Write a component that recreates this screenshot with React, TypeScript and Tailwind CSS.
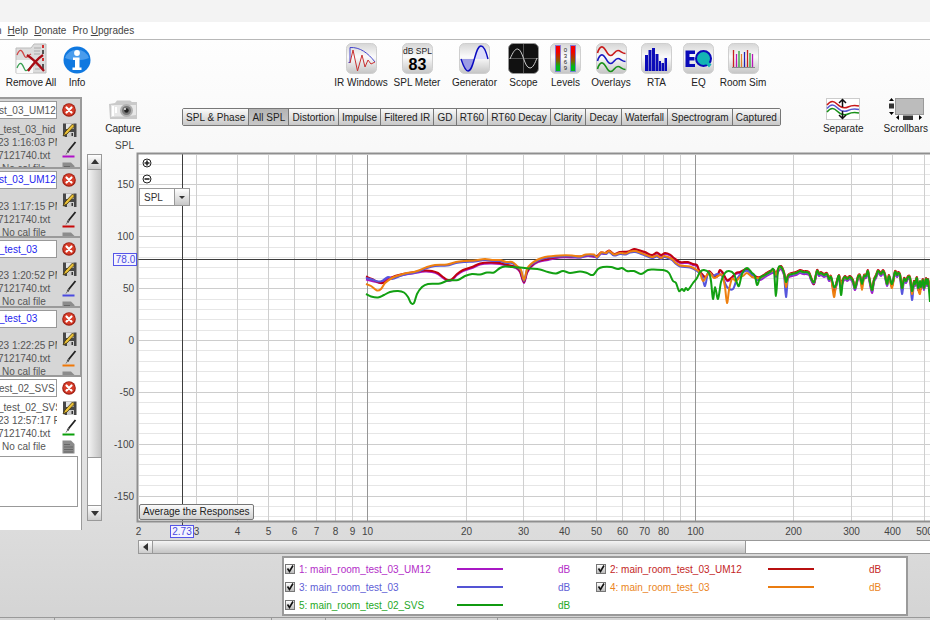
import { useState } from "react";
import type { ReactNode } from "react";

type Point = [number, number];

interface Measurement {
  title: string;
  notes: string;
  time: string;
  color: string;
  titleClass: string;
}

const measurements: Measurement[] = [
  { title: "st_03_UM12", notes: "_test_03_hid", time: "23 1:16:03 PM", color: "#b010c8", titleClass: "text-[#555]" },
  { title: "st_03_UM12", notes: "", time: "23 1:17:15 PM", color: "#c80808", titleClass: "text-[#2424f0]" },
  { title: "_test_03", notes: "", time: "23 1:20:52 PM", color: "#4a4ae0", titleClass: "text-[#2424f0]" },
  { title: "_test_03", notes: "", time: "23 1:22:25 PM", color: "#f07808", titleClass: "text-[#2424f0]" },
];

const selected: Measurement = {
  title: "est_02_SVS",
  notes: "_test_02_SVS",
  time: "23 12:57:17 PM",
  color: "#0a9f0a",
  titleClass: "text-[#555]",
};

const tabs = [
  "SPL & Phase",
  "All SPL",
  "Distortion",
  "Impulse",
  "Filtered IR",
  "GD",
  "RT60",
  "RT60 Decay",
  "Clarity",
  "Decay",
  "Waterfall",
  "Spectrogram",
  "Captured",
];

const legend = [
  { label: "1: main_room_test_03_UM12", textClass: "text-[#b32cc8]", lineClass: "bg-[#a818c4]" },
  { label: "2: main_room_test_03_UM12", textClass: "text-[#c42626]", lineClass: "bg-[#b81010]" },
  { label: "3: main_room_test_03", textClass: "text-[#6060d6]", lineClass: "bg-[#5454d4]" },
  { label: "4: main_room_test_03", textClass: "text-[#ea8422]", lineClass: "bg-[#ea7c10]" },
  { label: "5: main_room_test_02_SVS", textClass: "text-[#26a826]", lineClass: "bg-[#109a10]" },
];

// Traces are stored as plotted points; above ~160 Hz all of them share one shape.
const tail: Point[] = [
  [760, 278], [765, 275], [770, 272], [774, 271], [776, 275], [778, 270], [781, 267], [784, 273], [786, 282], [788, 276], [792, 274],
  [796, 273], [800, 271], [803, 272], [809, 273], [811, 278], [814, 282], [817, 271], [819, 274], [821, 273], [824, 275], [827, 274],
  [829, 279], [831, 277], [834, 287], [836, 285], [839, 276], [841, 284], [843, 280], [845, 277], [847, 279], [850, 277], [853, 281],
  [855, 288], [858, 277], [860, 276], [862, 284], [864, 276], [866, 276], [868, 271], [869, 277], [872, 290], [874, 280], [876, 276],
  [878, 271], [881, 274], [883, 271], [885, 275], [887, 284], [889, 276], [892, 284], [895, 272], [897, 275], [898, 273], [900, 275],
  [902, 288], [904, 279], [906, 281], [908, 277], [910, 278], [912, 291], [914, 282], [915, 284], [917, 278], [918, 288], [920, 281],
  [921, 287], [923, 280], [924, 288], [926, 279], [927, 284], [928, 280], [930, 290],
];

const tailWith = (dy: number, dips: Record<number, number>): Point[] =>
  tail.map(([x, y]) => [x, dips[x] ?? y + dy]);

const red: Point[] = [
  [366, 276.5], [372, 279], [378, 282], [383, 283], [388, 280], [395, 276], [403, 274], [415, 272], [425, 270.5], [432, 271], [438, 273],
  [443, 277], [448, 280], [452, 279], [457, 274], [463, 270], [472, 267], [480, 263.5], [490, 262.5], [500, 263], [508, 265], [516, 267],
  [520, 271], [524, 282], [527, 272], [531, 266], [538, 261], [548, 259], [560, 256.5], [580, 256.5], [588, 255], [597, 256], [601, 252.5],
  [605, 253], [609, 250.5], [614, 254], [620, 252], [628, 251.5], [634, 249], [640, 250.5], [645, 252], [652, 255], [657, 252.5], [661, 255],
  [665, 253], [670, 254.5], [674, 258], [680, 262], [688, 262], [693, 264], [697, 265], [699, 270], [702, 274], [706, 277], [709, 271],
  [713, 275], [717, 276], [720, 270], [723, 273], [727, 280], [731, 278], [736, 273], [740, 272], [747, 269], [752, 274], [757, 277],
];

const orange: Point[] = [
  [366, 284], [371, 286], [377, 290.5], [381, 289], [385, 283], [392, 278], [400, 275], [407, 273], [414, 272], [420, 270], [427, 267],
  [435, 265], [447, 264.5], [456, 262], [465, 261], [475, 260.5], [485, 259], [492, 260], [500, 260], [506, 262], [512, 262], [517, 266],
  [521, 270], [524, 280], [527, 269], [531, 264], [538, 259.5], [545, 257], [560, 255.5], [572, 255.5], [580, 256.5], [586, 254.5],
  [594, 254.5], [597, 257], [601, 252.5], [606, 253], [609, 251], [614, 254.5], [620, 253], [626, 253.5], [630, 251.5], [635, 251],
  [640, 252.5], [645, 254.5], [652, 257], [657, 255.5], [661, 258], [664, 256], [668, 257], [672, 259], [676, 263], [680, 265.5],
  [690, 266.5], [697, 270], [700, 273], [703, 281], [707, 275], [710, 273], [714, 278], [718, 276], [722, 275], [725, 287], [727, 303],
  [729, 290], [732, 279], [736, 281], [740, 277], [743, 276], [747, 273], [752, 277], [757, 278],
];

const purple: Point[] = [[366, 279.5], [372, 281], [378, 282.5], [382, 283], [388, 278], ...red.filter(([x]) => x > 390).map(([x, y]): Point => [x, y + 1])];

const blue: Point[] = [
  [366, 278], [372, 279.5], [378, 281.5], [382, 281], [388, 277],
  ...orange.filter(([x]) => x > 390 && x < 700).map(([x, y]): Point => [x, y + 1]),
  [702, 276], [705, 286], [708, 273], [713, 276], [717, 274], [722, 276], [727, 287], [733, 289], [737, 279], [742, 273], [748, 271], [757, 280],
];

const green: Point[] = [
  [366, 294], [371, 296.5], [378, 297.5], [384, 295], [390, 292], [398, 291], [404, 292.5], [408, 297], [411, 303], [414, 303], [417, 294],
  [422, 287], [428, 284], [440, 283.5], [448, 280.5], [458, 280], [465, 276], [472, 274], [480, 274.5], [487, 272.5], [494, 272.5],
  [500, 268], [505, 266.5], [512, 267], [520, 267.5], [530, 268.5], [540, 269.5], [548, 272], [556, 273.5], [563, 271], [570, 273],
  [580, 271.5], [587, 273], [593, 275], [598, 269], [603, 267], [611, 267], [618, 269], [622, 268], [627, 271], [634, 271], [641, 274],
  [648, 270], [652, 269.5], [665, 270.5], [669, 273], [673, 281], [676, 283], [679, 291], [682, 289], [684, 291], [686, 288], [688, 290],
  [693, 283], [697, 278], [700, 272], [704, 270], [709, 273], [711, 281], [713, 299], [715, 287], [718, 299], [721, 282], [725, 273],
  [729, 271], [734, 274], [737, 283], [739, 286], [742, 274], [747, 268], [752, 273], [755, 276], [757, 285],
];

const traces = [
  { color: "#a818c4", points: [...purple, ...tailWith(2, { 834: 292, 872: 293, 912: 293 })] },
  { color: "#c00010", points: [...red, ...tailWith(-1, { 814: 284, 834: 292, 892: 286, 920: 290 })] },
  { color: "#5656dc", points: [...blue, ...tailWith(1, { 786: 297, 902: 294, 912: 300, 930: 293 })] },
  { color: "#ee8010", points: [...orange, ...tailWith(0, { 786: 287, 834: 297, 862: 290, 892: 288, 912: 294, 920: 294 })] },
  { color: "#12a012", points: [...green, ...tailWith(0, { 776: 296, 841: 295, 930: 302 })] },
];

// Catmull-Rom through the points, as cubic segments.
function smoothPath(points: Point[]) {
  let d = `M${points[0][0]} ${points[0][1]}`;
  for (let i = 0; i < points.length - 1; i++) {
    const p0 = points[i - 1] ?? points[i];
    const p1 = points[i];
    const p2 = points[i + 1];
    const p3 = points[i + 2] ?? p2;
    const k = (p2[0] - p1[0]) / 3;
    const m1 = (p2[1] - p0[1]) / Math.max(p2[0] - p0[0], 1);
    const m2 = (p3[1] - p1[1]) / Math.max(p3[0] - p1[0], 1);
    d += `C${p1[0] + k} ${p1[1] + m1 * k} ${p2[0] - k} ${p2[1] - m2 * k} ${p2[0]} ${p2[1]}`;
  }
  return d;
}

const freqX = (f: number) => Math.round(367 + Math.log10(f / 10) * 327.8) + 0.5;
const levelY = (db: number) => Math.round(340 - db * 1.037) + 0.5;

const freqs = [1, 10, 100, 1000].flatMap((d) => [1, 2, 3, 4, 5, 6, 7, 8, 9].map((n) => n * d)).filter((f) => f > 2);
const labelled = [2, ...freqs.filter((f) => f <= 500 && f !== 90)];
const levels = Array.from({ length: 35 }, (_, i) => 170 - i * 10);
const isDecade = (f: number) => f === 10 || f === 100 || f === 1000;

function Chart() {
  return (
    <svg className="block h-[402px] w-full font-[Liberation_Sans,sans-serif] text-[10px]" role="img" aria-label="SPL against frequency">
      <g transform="translate(-105 -138)">
        <rect x="138" y="154" width="3000" height="368" fill="#fff" />
        {levels.map((db) => (
          <line key={db} x1="139" x2="3000" y1={levelY(db)} y2={levelY(db)} stroke={db % 50 === 0 ? "#cdcdcd" : "#e6e6e6"} />
        ))}
        {freqs.map((f) => (
          <line key={f} x1={freqX(f)} x2={freqX(f)} y1="155" y2="521" stroke={isDecade(f) ? "#969696" : "#cfcfcf"} />
        ))}
        <path d="M138 259.5H3000M182.5 154V526" stroke="#3c3c3c" fill="none" />
        {traces.map((t) => (
          <path key={t.color} d={smoothPath(t.points)} fill="none" stroke={t.color} strokeWidth="2" strokeLinejoin="round" />
        ))}
        <path d="M3000 153.5H137.5V521.5H3000" stroke="#8f8f8f" strokeWidth="2" fill="none" />
        <g fill="#444">
          <text x="134" y="149" textAnchor="end">SPL</text>
          {[150, 100, 50, 0, -50, -100, -150].map((db) => (
            <text key={db} x="134" y={levelY(db) + 3.5} textAnchor="end">{db}</text>
          ))}
          {labelled.map((f) => (
            <text key={f} x={freqX(f)} y="535" textAnchor="middle">{f}</text>
          ))}
        </g>
        <g fill="#f4f4ff" stroke="#5555e8">
          <rect x="113.5" y="253.5" width="23" height="12" />
          <rect x="170.5" y="525.5" width="23" height="12" />
        </g>
        <g fill="#4a4ae0">
          <text x="125.5" y="263" textAnchor="middle">78.0</text>
          <text x="182" y="535" textAnchor="middle">2.73</text>
        </g>
      </g>
    </svg>
  );
}

function Tile({ children, dark }: { children: ReactNode; dark?: boolean }) {
  return (
    <svg viewBox="0 0 31 31" className="h-[31px] w-[31px] shrink-0" fill="none" aria-hidden>
      <defs>
        <linearGradient id="tile" x1="0" y1="0" x2="0" y2="1">
          <stop offset="0" stopColor="#d6d6d6" />
          <stop offset="0.45" stopColor="#fbfbfb" />
          <stop offset="1" stopColor="#c4c4c4" />
        </linearGradient>
      </defs>
      <rect x="0.5" y="0.5" width="30" height="30" rx="5" fill={dark ? "#111" : "url(#tile)"} stroke={dark ? "#999" : "#cfcfcf"} />
      {children}
    </svg>
  );
}

const tools = [
  {
    label: "IR Windows",
    box: "w-[54px]",
    icon: (
      <Tile>
        <path d="M2.5 19.500H4V4.500C14 4 22 10 29 19" stroke="#4444cc" />
        <path d="M4 20L7 7L11.500 28L16 12L19 24L22 17L25 21L29 19" stroke="#c83030" strokeLinejoin="round" />
      </Tile>
    ),
  },
  {
    label: "SPL Meter",
    box: "w-[48px]",
    icon: (
      <Tile>
        <text x="15.500" y="11" textAnchor="middle" fill="#222" fontSize="8.500">dB SPL</text>
        <text x="15.500" y="27" textAnchor="middle" fill="#000" fontSize="16" fontWeight="bold">83</text>
      </Tile>
    ),
  },
  {
    label: "Generator",
    box: "w-[57px]",
    icon: (
      <Tile>
        <path d="M2 16C5 25 7 28 9 28C13 28 14 19 15.500 16Z" fill="#9c9ce4" />
        <path d="M15.500 16C17 9 19 3 22 3C25 3 27 8 29 16Z" fill="#dcdcfa" />
        <path d="M2 16C5 25 7 28 9 28C15 28 16 3 22 3C25 3 27 8 29 16" stroke="#0a0ac0" strokeWidth="1.400" />
      </Tile>
    ),
  },
  {
    label: "Scope",
    box: "w-[31px]",
    icon: (
      <Tile dark>
        <path d="M1 15.500H30M15.500 1V30" stroke="#555" />
        <path d="M2 16C5 9 7 6 9.500 6C15 6 16 25 22 25C25 25 27 20 29 15" stroke="#ccc" />
      </Tile>
    ),
  },
  {
    label: "Levels",
    box: "w-[43px]",
    icon: (
      <Tile>
        <defs>
          <linearGradient id="level" x1="0" y1="0" x2="0" y2="1">
            <stop offset="0.25" stopColor="#f40000" />
            <stop offset="0.6" stopColor="#806000" />
            <stop offset="0.8" stopColor="#00b818" />
          </linearGradient>
        </defs>
        <rect x="5.500" y="2.500" width="5" height="26" fill="url(#level)" stroke="#7777e8" strokeWidth="0.800" />
        <rect x="20.500" y="2.500" width="5" height="26" fill="url(#level)" stroke="#7777e8" strokeWidth="0.800" />
        {["0", "3", "6", "9"].map((n, i) => (
          <text key={n} x="15.500" y={8.5 + i * 6} textAnchor="middle" fill="#222" fontSize="6">{n}</text>
        ))}
      </Tile>
    ),
  },
  {
    label: "Overlays",
    box: "w-[38px]",
    icon: (
      <Tile>
        {[["#c81818", 0], ["#1818c0", 8], ["#189018", 16]].map(([c, dy]) => (
          <path key={c} transform={`translate(0 ${dy})`} d="M1.500 10C3 5 4.500 3.500 6.500 4C10 5 11 12.500 14.500 12.500C18 12.500 18.500 7.500 22 7.500C24.500 7.500 26 10.500 29.500 10.500" stroke={c as string} strokeWidth="1.600" />
        ))}
      </Tile>
    ),
  },
  {
    label: "RTA",
    box: "w-[43px]",
    icon: (
      <Tile>
        <path d="M4 28V12H7V28ZM7.500 28V7H10.500V28ZM11 28V5H14V28ZM14.500 28V11H17.500V28ZM18 28V18H20V28ZM20.500 28V20H23V28ZM23.500 28V15H26V28Z" fill="#0a0ab8" />
      </Tile>
    ),
  },
  {
    label: "EQ",
    box: "w-[31px]",
    icon: (
      <Tile>
        <path d="M2.500 7.500H12V11H6.500V14H11.500V17.500H6.500V21H12V24H2.500Z" fill="#0a0ab8" />
        <circle cx="20.500" cy="15.500" r="7.500" fill="#14b4b4" stroke="#0a0ab8" strokeWidth="2" />
        <path d="M20.500 18L23.500 17L28.500 21.500L26 24.500Z" fill="#14b4b4" />
      </Tile>
    ),
  },
  {
    label: "Room Sim",
    box: "w-[48px]",
    icon: (
      <Tile>
        <path d="M4 24.500H27" stroke="#888" />
        {[
          [5.5, 7, "#c82020"], [8.500, 11, "#b818b8"], [11, 8, "#28a038"], [13.500, 11, "#e08030"], [16.500, 9, "#2020b0"],
          [19.500, 7, "#c82020"], [22, 10, "#28a038"], [24.500, 11, "#b818b8"],
        ].map(([x, y, c]) => (
          <path key={x} d={`M${x} 24V${y}`} stroke={c as string} strokeWidth="1.300" />
        ))}
      </Tile>
    ),
  },
];

function RemoveAllIcon() {
  return (
    <svg viewBox="0 0 32 31" className="h-[31px] w-8" fill="none" aria-hidden>
      <path d="M1 5H16L19 1H31V30H1Z" fill="#dcdcdc" stroke="#bbb" />
      <path d="M1.500 17H18V30H1.500Z" fill="#fafafa" />
      <path d="M19 5H26M19 8H25M19 11H25M20 22H26M20 26H25" stroke="#aaa" />
      <path d="M28 2V5M28 15V18" stroke="#d03030" strokeWidth="2" />
      <path d="M28 7V11M28 21V26" stroke="#555" strokeWidth="2" />
      <path d="M2 12C5 5 7 7 9 12S12 13 16 11" stroke="#d04848" strokeWidth="1.300" />
      <path d="M2 25C5 18 7 20 9 25S12 27 16 24" stroke="#38a050" strokeWidth="1.300" />
      <path d="M12 12C18 16 24 22 29 28M28 12C22 16 18 21 13 28" stroke="#a80c14" strokeWidth="2.300" />
    </svg>
  );
}

function InfoIcon() {
  return (
    <svg viewBox="0 0 28 28" className="h-7 w-7" aria-hidden>
      <circle cx="14" cy="14" r="13.500" fill="#0f78e0" />
      <path d="M2 12A12.500 11.500 0 0 1 26 12C18 15 10 15 2 12Z" fill="#4a9cec" />
      <circle cx="14" cy="7" r="2.900" fill="#fff" />
      <path d="M10 11.500H16.500V21.500H18.500V24H9.500V21.500H12V14H10Z" fill="#fff" />
    </svg>
  );
}

function CaptureIcon() {
  return (
    <svg viewBox="0 0 30 20" className="h-5 w-[30px]" aria-hidden>
      <path d="M1 4L7 3L9 0.500H22L24 2H29V19H2Z" fill="#cacaca" />
      <path d="M3 5H28V15C18 17 10 16 3 17Z" fill="#e8e8e8" />
      <path d="M5 6V16M8 7V13" stroke="#fff" strokeWidth="2" />
      <circle cx="18.500" cy="10.500" r="6.500" fill="#b0b0b0" />
      <circle cx="18.500" cy="10.500" r="4.500" fill="#787878" />
      <circle cx="18.500" cy="10.500" r="2.200" fill="#222" />
      <circle cx="17" cy="9" r="1" fill="#eee" />
    </svg>
  );
}

function SeparateIcon() {
  return (
    <svg viewBox="0 0 34 22" className="h-[22px] w-[34px]" fill="none" aria-hidden>
      <rect x="0.500" y="0.500" width="33" height="21" fill="#fff" stroke="#ccc" />
      {[["#c81818", 0], ["#5858d0", 3.500], ["#189018", 7]].map(([c, dy]) => (
        <path key={c} transform={`translate(0 ${dy})`} d="M1 7C5 2 8 3 11 6S18 11 22 9S28 7 33 8" stroke={c as string} strokeWidth="1.500" />
      ))}
      <path d="M16.500 9V2M13 5L16.500 1.500L20 5M16.500 13V20M13 17L16.500 20.500L20 17" stroke="#111" strokeWidth="1.500" />
    </svg>
  );
}

function ScrollbarsIcon() {
  return (
    <svg viewBox="0 0 36 22" className="h-[22px] w-9" aria-hidden>
      <rect x="7.500" y="0.500" width="28" height="16" fill="#bcbcbc" stroke="#999" />
      <path d="M1 3L3.500 0L6 3ZM1 14L3.500 17L6 14ZM11 17L8 19.500L11 22ZM31 17L34 19.500L31 22Z" fill="#000" />
      <path d="M1 5.500H6V10.500H1ZM15 17.500H25V22H15Z" fill="#333" />
    </svg>
  );
}

function RemoveIcon() {
  return (
    <svg viewBox="0 0 14 14" className="h-3.5 w-3.5" aria-hidden>
      <circle cx="7" cy="7" r="6.800" fill="#9a1a10" />
      <circle cx="7" cy="6.800" r="5.800" fill="#d63c28" />
      <path d="M4.500 4.500L9.500 9.500M9.500 4.500L4.500 9.500" stroke="#fff" strokeWidth="2.200" strokeLinecap="round" />
    </svg>
  );
}

function SaveIcon() {
  return (
    <svg viewBox="0 0 15 14" className="h-3.5 w-[15px]" aria-hidden>
      <path d="M1 0.500H14.500V14H3L1 12Z" fill="#484848" />
      <path d="M4 0.500H11.500V6H4Z" fill="#e4e4e4" />
      <path d="M5 9H12V14H5Z" fill="#ccc" />
      <path d="M9.500 10H11V13H9.500Z" fill="#333" />
      <path d="M1 13L3 9L10.500 1L12.500 3L5 11Z" fill="#ecc238" stroke="#40340c" strokeWidth="0.800" />
    </svg>
  );
}

function PenIcon({ color }: { color: string }) {
  return (
    <svg viewBox="0 0 15 17" className="h-[17px] w-[15px]" aria-hidden>
      <path d="M13.500 1L7 9L5.500 11.500" stroke="#222" strokeWidth="1.800" fill="none" />
      <path d="M7 9L4 13.500" stroke="#777" />
      <path d="M0.500 15.500H12.500" stroke={color} strokeWidth="2" />
    </svg>
  );
}

function NotesIcon() {
  return (
    <svg viewBox="0 0 13 14" className="h-3.5 w-[13px]" aria-hidden>
      <path d="M0.500 0.500H9L12.500 4V13.500H0.500Z" fill="#8c8c8c" />
      <path d="M2 4.500H8M2 7H11M2 9.500H11M2 12H11" stroke="#666" />
    </svg>
  );
}

function MeasurementRow({ m }: { m: Measurement }) {
  return (
    <div className="flex pt-0.5">
      <div className="w-[57px] shrink-0 overflow-hidden leading-[13px] whitespace-nowrap text-[#555]">
        <div className="-ml-0.5">
          <input
            className={`mb-1 block h-[18px] w-[59px] border border-[#999] bg-white outline-none ${m.titleClass}`}
            aria-label="Measurement name"
            defaultValue={m.title}
          />
          <p className="min-h-[7px]">{m.notes}</p>
          <p>{m.time}</p>
          <p>7121740.txt</p>
          <p className="pl-1">No cal file</p>
        </div>
      </div>
      <div className="flex flex-col items-start gap-1 pl-[5px]">
        <button type="button" className="mt-0.5 mb-0.5" aria-label="Remove measurement">
          <RemoveIcon />
        </button>
        <button type="button" aria-label="Save measurement">
          <SaveIcon />
        </button>
        <button type="button" aria-label="Trace colour">
          <PenIcon color={m.color} />
        </button>
        <button type="button" aria-label="Notes">
          <NotesIcon />
        </button>
      </div>
    </div>
  );
}

function ToolButton({ label, box, children }: { label: string; box?: string; children: ReactNode }) {
  return (
    <button type="button" className={`flex shrink-0 flex-col items-center gap-px whitespace-nowrap text-[#222] ${box ?? ""}`}>
      {children}
      <span className="leading-4">{label}</span>
    </button>
  );
}

function Arrow({ d }: { d: string }) {
  return (
    <svg viewBox="0 0 10 10" className="h-2.5 w-2.5" aria-hidden>
      <path d={d} fill="#333" />
    </svg>
  );
}

export default function App() {
  const [tab, setTab] = useState("All SPL");

  return (
    <div className="flex min-h-screen flex-col overflow-hidden bg-white font-[Liberation_Sans,sans-serif] text-[10px] text-[#333]">
      <div className="h-[22px] bg-[#f3f3f3]" />
      <nav className="flex h-[18px] items-center gap-1.5 border-b border-[#b8b8b8] text-[#444]">
        <span className="-ml-1">n</span>
        <a href="#help"><u>H</u>elp</a>
        <a href="#donate"><u>D</u>onate</a>
        <a href="#upgrades">Pro <u>U</u>pgrades</a>
      </nav>

      <div className="flex grow flex-col bg-linear-to-b from-[#fefefe] via-[#eeeeee] to-[#d4d4d4]">
        <header className="flex h-[57px] shrink-0 items-start pt-[3px] pl-1.5">
          <ToolButton label="Remove All" box="w-[50px]"><RemoveAllIcon /></ToolButton>
          <div className="ml-[7px] pt-[3px]">
            <ToolButton label="Info" box="w-7"><InfoIcon /></ToolButton>
          </div>
          <div className="ml-[243px] flex gap-x-[5px]">
            {tools.map((t) => (
              <ToolButton key={t.label} label={t.label} box={t.box}>{t.icon}</ToolButton>
            ))}
          </div>
        </header>

        <div className="flex">
          <aside className="w-[82px] shrink-0">
            <div className="grid h-[278px] grid-rows-4">
              {measurements.map((m) => (
                <section key={m.time} className="min-h-0 overflow-hidden border-t-2 border-r-2 border-[#9a9a9a] bg-[#d6d6d6]">
                  <MeasurementRow m={m} />
                </section>
              ))}
            </div>
            <section className="flex h-[155px] flex-col border-t-2 border-r border-[#9a9a9a] bg-white">
              <MeasurementRow m={selected} />
              <textarea aria-label="Measurement notes" className="mt-0.5 mr-[3px] h-[51px] resize-none border border-l-0 border-[#999] bg-white" />
            </section>
          </aside>

          <div className="mt-[57px] ml-[5px] flex h-[367px] w-[15px] shrink-0 flex-col border border-[#999] bg-white">
            <button type="button" aria-label="Scroll up" className="grid h-3.5 place-items-center bg-linear-to-b from-white to-[#ccc]">
              <Arrow d="M1 7L5 2L9 7Z" />
            </button>
            <div className="h-[289px] border-y border-[#999] bg-linear-to-r from-[#f4f4f4] to-[#c4c4c4]" />
            <button type="button" aria-label="Scroll down" className="mt-auto grid h-[15px] place-items-center border-t border-[#999] bg-linear-to-b from-white to-[#ccc]">
              <Arrow d="M1 3L5 8L9 3Z" />
            </button>
          </div>

          <main className="ml-[3px] min-w-0 grow">
            <div className="flex h-[41px] items-start pr-0.5">
              <div className="pt-[3px]">
                <ToolButton label="Capture" box="w-9"><CaptureIcon /></ToolButton>
              </div>
              <div className="mt-[11px] ml-[41px] flex h-[18px] w-[599px] shrink-0 overflow-hidden rounded-xs border border-[#777]" role="tablist">
                {tabs.map((t) => (
                  <button
                    key={t}
                    type="button"
                    role="tab"
                    aria-selected={t === tab}
                    onClick={() => setTab(t)}
                    className={`grow border-r border-[#777] px-[3px] whitespace-nowrap text-[#222] last:border-r-0 ${
                      t === tab ? "bg-linear-to-b from-[#b4b4b4] to-[#c8c8c8]" : "bg-linear-to-b from-[#fafafa] to-[#c8c8c8]"
                    }`}
                  >
                    {t}
                  </button>
                ))}
              </div>
              <div className="ml-auto flex gap-5 pt-px">
                <ToolButton label="Separate"><SeparateIcon /></ToolButton>
                <ToolButton label="Scrollbars"><ScrollbarsIcon /></ToolButton>
              </div>
            </div>

            <div className="relative">
              <Chart />
              <div className="absolute top-5 left-[34px] flex flex-col items-start">
                <button type="button" aria-label="Zoom in" className="mb-1.5 ml-[3px]">
                  <svg viewBox="0 0 10 10" className="h-2.5 w-2.5" fill="none" stroke="#222">
                    <circle cx="5" cy="5" r="4" />
                    <path d="M2.500 5H7.500M5 2.500V7.500" strokeWidth="1.600" />
                  </svg>
                </button>
                <button type="button" aria-label="Zoom out" className="mb-1 ml-[3px]">
                  <svg viewBox="0 0 10 10" className="h-2.5 w-2.5" fill="none" stroke="#222">
                    <circle cx="5" cy="5" r="4" />
                    <path d="M2.500 5H7.500" strokeWidth="1.600" />
                  </svg>
                </button>
                <div className="grid h-[18px] w-[51px] border border-[#999] bg-white">
                  <select aria-label="Y axis" className="col-start-1 row-start-1 appearance-none bg-transparent pl-1 text-[#333] outline-none">
                    <option>SPL</option>
                  </select>
                  <span className="pointer-events-none col-start-1 row-start-1 grid w-[15px] place-items-center justify-self-end border-l border-[#999] bg-linear-to-b from-white to-[#c8c8c8]">
                    <Arrow d="M2 4L5 7L8 4Z" />
                  </span>
                </div>
              </div>
              <button
                type="button"
                className="absolute bottom-5 left-[34px] h-4 rounded-xs border border-[#777] bg-linear-to-b from-[#fafafa] to-[#d0d0d0] px-[3px] leading-[14px] whitespace-nowrap text-[#222]"
              >
                Average the Responses
              </button>
            </div>

            <div className="ml-[33px] flex h-3.5 border border-r-0 border-[#999] bg-white">
              <button type="button" aria-label="Scroll left" className="grid w-3.5 place-items-center border-r border-[#999] bg-linear-to-b from-white to-[#ccc]">
                <Arrow d="M7 1L2 5L7 9Z" />
              </button>
              <div className="w-[75%] border-r border-[#999] bg-linear-to-b from-[#f4f4f4] to-[#c4c4c4]" />
            </div>

            <div className="mt-0.5 mr-[22px] ml-[177px] grid grid-cols-2 border-2 border-[#9a9a9a] bg-white pt-0.5">
              {legend.map((item) => (
                <div key={item.label} className={`flex h-[18px] items-center pl-px ${item.textClass}`}>
                  <label className="flex w-[172px] items-center gap-1 whitespace-nowrap">
                    <span className="grid h-2.5 w-2.5">
                      <input
                        type="checkbox"
                        defaultChecked
                        className="peer col-start-1 row-start-1 h-2.5 w-2.5 appearance-none border border-[#777] bg-linear-to-b from-white to-[#bbb]"
                      />
                      <svg viewBox="0 0 10 10" className="pointer-events-none invisible col-start-1 row-start-1 h-2.5 w-2.5 peer-checked:visible" fill="none" aria-hidden>
                        <path d="M2.500 4.500L4.500 7.500L8 1.500" stroke="#111" strokeWidth="1.600" />
                      </svg>
                    </span>
                    {item.label}
                  </label>
                  <span className={`h-0.5 w-[46px] ${item.lineClass}`} />
                  <span className="ml-[55px]">dB</span>
                </div>
              ))}
            </div>
          </main>
        </div>

        <footer className="mt-auto flex h-[3px] border-t border-[#999]">
          <span className="w-[55px] border-r border-[#999]" />
          <span className="w-[217px] border-r border-[#999]" />
          <span className="w-[54px] border-r border-[#999]" />
          <span className="w-[172px] border-r border-[#999]" />
        </footer>
      </div>
    </div>
  );
}
